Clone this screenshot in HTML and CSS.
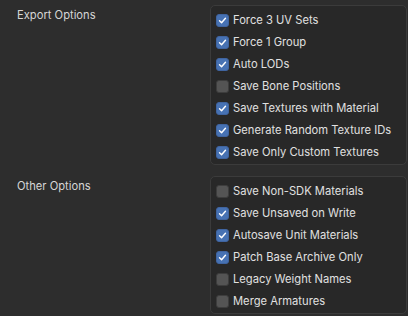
FILE: index.html
```html
<!DOCTYPE html>
<html lang="en">
<head>
  <meta charset="UTF-8">
  <title>Export Settings</title>
  <link rel="stylesheet" href="styles.css">
</head>
<body>

  <!-- Export options -->
  <section class="group">
    <div class="group-label">Export Options</div>
    <div class="box">
      <label class="opt"><span class="check on"></span>Force 3 UV Sets</label>
      <label class="opt"><span class="check on"></span>Force 1 Group</label>
      <label class="opt"><span class="check on"></span>Auto LODs</label>
      <label class="opt"><span class="check"></span>Save Bone Positions</label>
      <label class="opt"><span class="check on"></span>Save Textures with Material</label>
      <label class="opt"><span class="check on"></span>Generate Random Texture IDs</label>
      <label class="opt"><span class="check on"></span>Save Only Custom Textures</label>
    </div>
  </section>

  <!-- Other options -->
  <section class="group">
    <div class="group-label">Other Options</div>
    <div class="box">
      <label class="opt"><span class="check"></span>Save Non-SDK Materials</label>
      <label class="opt"><span class="check on"></span>Save Unsaved on Write</label>
      <label class="opt"><span class="check on"></span>Autosave Unit Materials</label>
      <label class="opt"><span class="check on"></span>Patch Base Archive Only</label>
      <label class="opt"><span class="check"></span>Legacy Weight Names</label>
      <label class="opt"><span class="check"></span>Merge Armatures</label>
    </div>
  </section>

</body>
</html>
```

FILE: styles.css
```css
body {
  margin: 0;
  padding: 5px 1px 0 0;
  background: #2d2d2d;
  font-family: 'Inter', 'DejaVu Sans', sans-serif;
  font-size: 11.2px;
  color: #e0e0e0;
}

.group {
  display: flex;
  margin-bottom: 11px;
}

.group-label {
  width: 210px;
  padding: 3px 0 0 17px;
  box-sizing: border-box;
  color: #d6d6d6;
}

.box {
  flex: 1;
  background: #282828;
  border: 1px solid #3b3b3b;
  border-radius: 5px;
  padding: 3px 0 1px 5px;
  display: flex;
  flex-direction: column;
}

.opt {
  display: flex;
  align-items: center;
  gap: 4px;
  height: 22px;
}

.check {
  width: 13px;
  height: 13px;
  border-radius: 3px;
  background: #545454;
  box-sizing: border-box;
  border: 1px solid #3d3d3d;
}

.check.on {
  background: #4772b3 url("data:image/svg+xml,%3Csvg xmlns='http://www.w3.org/2000/svg' viewBox='0 0 13 13'%3E%3Cpath d='M3 6.8 L5.4 9.2 L10 3.8' fill='none' stroke='white' stroke-width='1.7' stroke-linecap='round' stroke-linejoin='round'/%3E%3C/svg%3E") no-repeat center;
  border-color: #3f64a0;
}
```
